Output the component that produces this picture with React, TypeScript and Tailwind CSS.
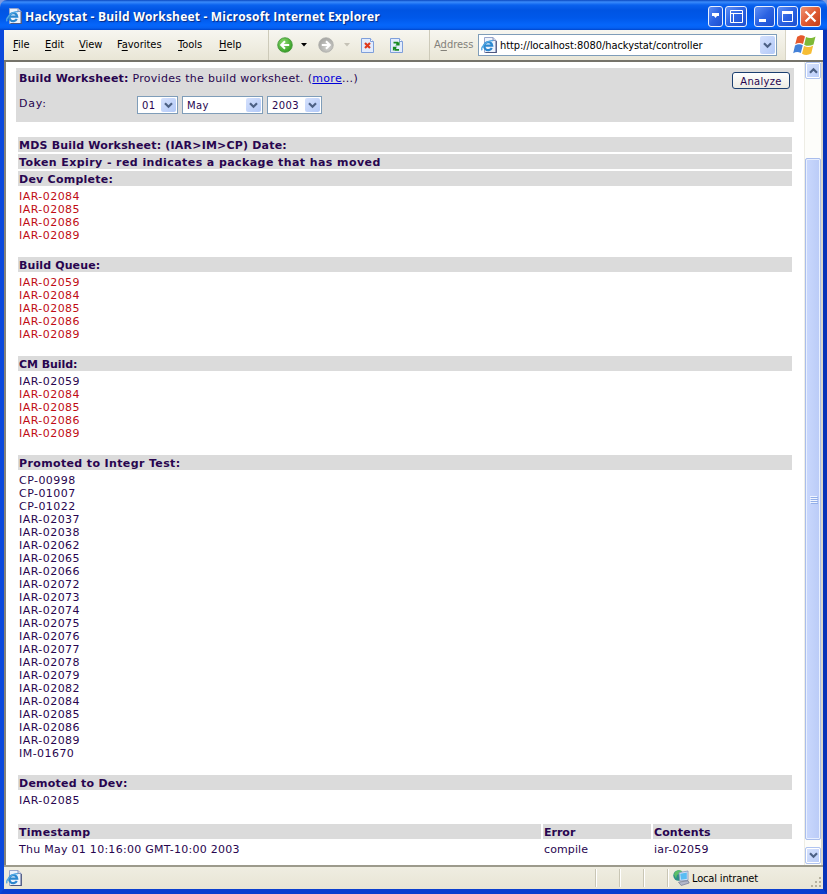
import type { ReactNode } from "react";

type Item = { id: string; moved?: boolean };

const ids = (prefix: string, list: string, moved = false): Item[] =>
  list.split(" ").map((n) => ({ id: prefix + n, moved }));

const sections: { title: string; tracking: string; items: Item[] }[] = [
  { title: "Dev Complete:", tracking: "tracking-[0.25px]", items: ids("IAR-", "02084 02085 02086 02089", true) },
  { title: "Build Queue:", tracking: "tracking-[0.12px]", items: ids("IAR-", "02059 02084 02085 02086 02089", true) },
  {
    title: "CM Build:",
    tracking: "tracking-[-0.05px]",
    items: [...ids("IAR-", "02059"), ...ids("IAR-", "02084 02085 02086 02089", true)],
  },
  {
    title: "Promoted to Integr Test:",
    tracking: "tracking-[0.37px]",
    items: [
      ...ids("CP-", "00998 01007 01022"),
      ...ids(
        "IAR-",
        "02037 02038 02062 02065 02066 02072 02073 02074 02075 02076 02077 02078 02079 02082 02084 02085 02086 02089"
      ),
      ...ids("IM-", "01670"),
    ],
  },
  { title: "Demoted to Dev:", tracking: "tracking-[0.25px]", items: ids("IAR-", "02085") },
];

function Bar({ children, className = "" }: { children: ReactNode; className?: string }) {
  return (
    <div className={`h-[15px] whitespace-nowrap bg-[#dbdbdb] px-px pt-[2px] font-bold ${className}`}>
      {children}
    </div>
  );
}

function Chevron({ up = false }: { up?: boolean }) {
  return (
    <svg width="9" height="7" viewBox="0 0 9 7" className={up ? "rotate-180" : ""}>
      <path d="M1 1.2 4.5 4.7 8 1.2" fill="none" stroke="#4d6185" strokeWidth="2.2" />
    </svg>
  );
}

function DropButton({ className }: { className: string }) {
  return (
    <span className={`flex shrink-0 items-center justify-center rounded-[2px] bg-gradient-to-br from-[#d5e1fd] to-[#b3c9f7] ${className}`}>
      <Chevron />
    </span>
  );
}

function Select({ value, width }: { value: string; width: string }) {
  return (
    <div className={`flex h-[18px] items-center justify-between border border-[#7f9db9] bg-white pl-1 pr-px text-[10px] tracking-[0.4px] ${width}`}>
      <span className="pt-px">{value}</span>
      <DropButton className="h-[14px] w-[15px]" />
    </div>
  );
}

function PageIcon() {
  return (
    <svg width="16" height="16" viewBox="0 0 16 16" className="shrink-0">
      <path d="M3.500.5h8.500l3 3v12H3.500z" fill="#edf2fc" stroke="#98a6cc" />
      <path d="M12 .5v3h3" fill="#cbd6ee" stroke="#8793b8" />
      <path d="M15.300 4v11.500H4.500" fill="none" stroke="#4e5880" strokeWidth="1.200" />
      <path d="M10.800 10.900A4 4 0 1 1 11.200 8.600H4" fill="none" stroke="#2b87cf" strokeWidth="2.200" />
      <path d="M1.200 13.300C-.8 11 5 3.200 12 3.600" fill="none" stroke="#4fa6e2" strokeWidth="1.300" />
    </svg>
  );
}

function NavCircle({ back = false }: { back?: boolean }) {
  return (
    <svg width="16" height="16" viewBox="0 0 16 16" className={back ? "" : "rotate-180"}>
      <defs>
        <radialGradient id={back ? "navOn" : "navOff"} cx=".4" cy=".35" r=".7">
          <stop offset="0" stopColor={back ? "#8fdc70" : "#d2d2ce"} />
          <stop offset="1" stopColor={back ? "#2f9a20" : "#a3a3a0"} />
        </radialGradient>
      </defs>
      <circle cx="8" cy="8" r="7.3" fill={back ? "url(#navOn)" : "url(#navOff)"} stroke={back ? "#43953a" : "#b0b0ac"} strokeWidth=".8" />
      <path d="M12.2 8H4.6M8 4.2 4.2 8 8 11.8" fill="none" stroke="#fff" strokeWidth="2" />
    </svg>
  );
}

function SheetIcon({ kind }: { kind: "stop" | "refresh" }) {
  return (
    <svg width="13" height="15" viewBox="0 0 13 15">
      <path d="M.5.5h9l3 3v11H.5z" fill="#e2ecfd" stroke="#7f9fda" />
      <path d="M9.5.5v3h3" fill="#fff" stroke="#7f9fda" />
      {kind === "stop" ? (
        <path d="m4 5 5 5M9 5l-5 5" stroke="#e0391c" strokeWidth="2.200" />
      ) : (
        <g fill="none" stroke="#188a24" strokeWidth="1.800">
          <path d="M3.500 4.700h3.700v1.800" />
          <path d="M9 11.800H5.300V10" />
          <path d="M9.600 3.200v4.300H5.300zM2.900 13V8.800h4.300z" fill="#188a24" stroke="none" />
        </g>
      )}
    </svg>
  );
}

function Flag() {
  return (
    <svg width="24" height="22" viewBox="0 0 24 22">
      <path d="M4.2 2.8C7 .7 9.6.8 12 2.4l-2 7.7C7.600 8.700 5 8.600 2.200 10.200z" fill="#e5592d" />
      <path d="M13 3c3 1.600 6 1.400 9.500-.6l-2 8c-3.300 1.800-6.200 2-9.300.3z" fill="#7db936" />
      <path d="M2 11.400c2.800-1.700 5.400-1.600 7.800-.1l-2 7.700C5.300 17.500 3 17.500.2 19.200z" fill="#4381d8" />
      <path d="M11 11.900c3 1.600 6 1.500 9.200-.4l-2 8c-3 1.800-6.200 1.900-9.200.2z" fill="#f6bd35" />
    </svg>
  );
}

function CaptionButton({ children, width = "w-[21px]", close = false }: { children: ReactNode; width?: string; close?: boolean }) {
  return (
    <span
      className={`flex h-[21px] items-center justify-center rounded-[3px] border border-[#e8effd] bg-gradient-to-br ${width} ${
        close ? "from-[#ee9272] via-[#e05a33] to-[#c23d17]" : "from-[#5f8ff5] via-[#2b62e2] to-[#1c4fd0]"
      }`}
    >
      {children}
    </span>
  );
}

function TitleBar() {
  return (
    <header className="flex h-[30px] shrink-0 items-center rounded-t-[7px] bg-[linear-gradient(#0a48c0_0,#3a8bfb_2px,#0a62ee_5px,#0054e3_10px,#0058ea_18px,#0566fb_25px,#0560f2_28px,#0045cc_30px)] pl-1.5 pr-[6px] pt-[3px]">
      <span className="-mt-[2px]">
        <PageIcon />
      </span>
      <h1 className="ml-[3px] flex-1 whitespace-nowrap font-['Open_Sans','Noto_Sans',sans-serif] text-[12px] font-bold leading-4 tracking-[0.2px] text-white [text-shadow:1px_1px_1px_#0a2a80]">
        Hackystat - Build Worksheet - Microsoft Internet Explorer
      </h1>
      <div className="flex">
        <CaptionButton width="w-[15px]">
          <svg width="9" height="9" viewBox="0 0 9 9">
            <path d="M1 1h7v3H6L4.500 6 3 4H1z" fill="#fff" />
          </svg>
        </CaptionButton>
        <span className="ml-[2px] flex">
          <CaptionButton width="w-[22px]">
            <svg width="13" height="13" viewBox="0 0 13 13" fill="none" stroke="#fff">
              <path d="M.5.5h12v12H.5zM.5 3.500h12M3.500 3.500v9" />
            </svg>
          </CaptionButton>
        </span>
        <span className="ml-[7px] flex gap-[2px]">
          <CaptionButton>
            <svg width="13" height="13" viewBox="0 0 13 13">
              <path d="M1 9h7v3H1z" fill="#fff" />
            </svg>
          </CaptionButton>
          <CaptionButton>
            <svg width="13" height="13" viewBox="0 0 13 13">
              <path d="M1.500 2v9.500h10V2" fill="none" stroke="#fff" />
              <path d="M1 1h11v3H1z" fill="#fff" />
            </svg>
          </CaptionButton>
          <CaptionButton close>
            <svg width="13" height="13" viewBox="0 0 13 13">
              <path d="m1.500 1.500 10 10m0-10-10 10" stroke="#fff" strokeWidth="2.200" />
            </svg>
          </CaptionButton>
        </span>
      </div>
    </header>
  );
}

function MenuItem({ pre = "", hot, post, width }: { pre?: string; hot: string; post: string; width: string }) {
  return (
    <span className={`shrink-0 whitespace-nowrap pt-px ${width}`}>
      {pre}
      <u className="underline-offset-2">{hot}</u>
      {post}
    </span>
  );
}

function Toolbar() {
  return (
    <nav className="flex h-[32px] shrink-0 items-center border-b-2 border-[#75736a] bg-gradient-to-b from-[#f7f6f0] to-[#e9e6d6] pl-[9px] font-['DejaVu_Sans_Condensed','DejaVu_Sans',sans-serif] text-[11px] text-black">
      <MenuItem hot="F" post="ile" width="w-[32px]" />
      <MenuItem hot="E" post="dit" width="w-[34px]" />
      <MenuItem hot="V" post="iew" width="w-[38px]" />
      <MenuItem pre="F" hot="a" post="vorites" width="w-[61px]" />
      <MenuItem hot="T" post="ools" width="w-[41px]" />
      <MenuItem hot="H" post="elp" width="w-[49px]" />
      <div className="flex h-full w-[161px] shrink-0 items-center border-l border-[#cdcab9] pl-[8px]">
        <NavCircle back />
        <svg width="6" height="4" className="ml-[8px]">
          <path d="M0 0h6L3 3.500z" fill="#000" />
        </svg>
        <span className="ml-[11px]">
          <NavCircle />
        </span>
        <svg width="6" height="4" className="ml-[10px]">
          <path d="M0 0h6L3 3.500z" fill="#c5c2b6" />
        </svg>
        <span className="ml-[11px]">
          <SheetIcon kind="stop" />
        </span>
        <span className="ml-[16px]">
          <SheetIcon kind="refresh" />
        </span>
      </div>
      <div className="flex h-full flex-1 items-center border-l border-[#cdcab9] pl-[4px]">
        <span className="w-[44px] shrink-0 pt-px text-[#83817a]">
          A<u className="underline-offset-2">d</u>dress
        </span>
        <div className="flex h-[22px] w-[299px] shrink-0 items-center border border-[#7f9db9] bg-white pl-[2px] pr-px">
          <PageIcon />
          <span className="ml-[3px] flex-1 whitespace-nowrap pt-[2px] tracking-[-0.06px]">
            http://localhost:8080/hackystat/controller
          </span>
          <DropButton className="h-[18px] w-[15px]" />
        </div>
      </div>
      <div className="flex h-full w-[38px] shrink-0 items-center justify-center border-l border-[#d8d5c6] bg-white">
        <Flag />
      </div>
    </nav>
  );
}

function ScrollBar() {
  const button =
    "flex h-[17px] shrink-0 items-center justify-center rounded-[2px] border border-[#b0c4f0] bg-gradient-to-br from-[#d8e3fd] to-[#b9ccf8] shadow-[inset_0_0_0_1px_#fff]";
  return (
    <aside className="flex w-[17px] shrink-0 flex-col border-l border-[#eeede5] bg-[#fdfdfa] pb-px">
      <div className={button}>
        <Chevron up />
      </div>
      <div className="mt-[79px] flex h-[682px] flex-col items-center justify-center gap-px rounded-[2px] border border-[#a9bdec] bg-gradient-to-r from-[#cad8fd] to-[#bacbf7] shadow-[inset_0_0_0_1px_#e8effe]">
        {[0, 1, 2, 3].map((i) => (
          <i key={i} className="h-px w-[7px] bg-[#f0f5ff] shadow-[1px_1px_0_#93afe8]" />
        ))}
      </div>
      <div className={`mt-auto ${button}`}>
        <Chevron />
      </div>
    </aside>
  );
}

function StatusBar() {
  return (
    <footer className="flex h-[24px] shrink-0 items-center border-t-2 border-[#9c9a8c] bg-gradient-to-b from-[#efede1] to-[#e8e5d5] pl-[2px] font-['DejaVu_Sans_Condensed','DejaVu_Sans',sans-serif] text-[11px] text-black">
      <PageIcon />
      <div className="ml-auto flex h-[18px]">
        {[0, 1, 2].map((i) => (
          <span key={i} className="w-[24px] border-l border-[#c9c6b5] shadow-[inset_1px_0_0_#fff]" />
        ))}
        <div className="flex w-[143px] items-center border-l border-[#c9c6b5] pl-[5px] shadow-[inset_1px_0_0_#fff]">
          <svg width="17" height="16" viewBox="0 0 17 16" className="shrink-0">
            <circle cx="5.500" cy="5.500" r="5.200" fill="#2c8f86" />
            <path d="M1 4.500c1-4 5-5 8-3.500L6 4 4 5 3 8.500z" fill="#5cc067" />
            <path d="M6 2.600 15 1v9.300L6.800 11z" fill="#d7e4f6" stroke="#8193b8" strokeWidth=".8" />
            <path d="m7.200 3.700 6.600-1.200v6.600L7.900 9.800z" fill="#58bdf3" />
            <path d="m5.500 12.200 9.500-1.500 1.200 2.300-8 2.500z" fill="#b3b8ca" stroke="#70778f" strokeWidth=".7" />
          </svg>
          <span className="ml-[2px] whitespace-nowrap pt-[3px] tracking-[-0.15px]">Local intranet</span>
        </div>
      </div>
      <svg width="12" height="12" viewBox="0 0 12 12" className="mb-px mr-px mt-auto" fill="#b5b19f">
        <path d="M9 1h2v2H9zM5 5h2v2H5zM9 5h2v2H9zM1 9h2v2H1zM5 9h2v2H5zM9 9h2v2H9z" />
      </svg>
    </footer>
  );
}

export default function App() {
  return (
    <div className="flex h-[894px] w-[827px] flex-col bg-[#7e9adf]">
      <TitleBar />
      <div className="flex min-h-0 flex-1 flex-col border-x-4 border-b-[5px] border-b-[#0b3fcf] border-l-[#0a48dc] border-r-[#0733b8]">
        <Toolbar />
        <div className="flex min-h-0 flex-1 border-l-2 border-r-2 border-l-[#85837a] border-r-[#d9d7cb] bg-white">
          <main className="flex-1 pl-[10px] pt-[6px] font-['DejaVu_Sans',sans-serif] text-[11px] leading-[13px] text-[#28054f]">
            <section className="flex h-[54px] w-[778px] justify-between bg-[#dbdbdb] pl-[3px] pr-[4px] pt-[4px]">
              <div>
                <p className="whitespace-nowrap tracking-[0.3px]">
                  <b className="tracking-[0.2px]">Build Worksheet:</b> Provides the build worksheet. (
                  <a href="#" className="text-[#0000d8] underline">
                    more
                  </a>
                  ...)
                </p>
                <div className="mt-[11px] flex">
                  <span className="w-[118px] pt-px tracking-[0.8px]">Day:</span>
                  <div className="flex gap-[4px]">
                    <Select value="01" width="w-[41px]" />
                    <Select value="May" width="w-[81px]" />
                    <Select value="2003" width="w-[55px]" />
                  </div>
                </div>
              </div>
              <button className="flex h-[17px] w-[58px] items-center justify-center rounded-[3px] border border-[#1b3f70] bg-gradient-to-b from-white to-[#ecebe4] pt-px text-[10px] tracking-[0.3px]">
                Analyze
              </button>
            </section>

            <section className="ml-[2px] mt-[15px] flex w-[774px] flex-col gap-[2px]">
              <Bar className="tracking-[0.2px]">MDS Build Worksheet: (IAR&gt;IM&gt;CP) Date:</Bar>
              <Bar className="tracking-[0.42px]">Token Expiry - red indicates a package that has moved</Bar>
              {sections.map((s) => (
                <div key={s.title} className="flex flex-col gap-[2px]">
                  <Bar className={s.tracking}>{s.title}</Bar>
                  <ul className="px-px pb-[13px] pt-[2px] tracking-[0.45px]">
                    {s.items.map((it) => (
                      <li key={it.id} className={it.moved ? "text-[#c00c14]" : ""}>
                        {it.id}
                      </li>
                    ))}
                  </ul>
                </div>
              ))}
            </section>

            <section className="ml-[2px] mt-[4px] grid w-[774px] grid-cols-[523px_108px_139px] gap-[2px]">
              <Bar className="tracking-[0.3px]">Timestamp</Bar>
              <Bar>Error</Bar>
              <Bar className="tracking-[0.12px]">Contents</Bar>
              <span className="px-px pt-[2px] tracking-[0.27px]">Thu May 01 10:16:00 GMT-10:00 2003</span>
              <span className="px-px pt-[2px] tracking-[0.1px]">compile</span>
              <span className="px-px pt-[2px] tracking-[0.25px]">iar-02059</span>
            </section>
          </main>
          <ScrollBar />
        </div>
        <StatusBar />
      </div>
    </div>
  );
}
